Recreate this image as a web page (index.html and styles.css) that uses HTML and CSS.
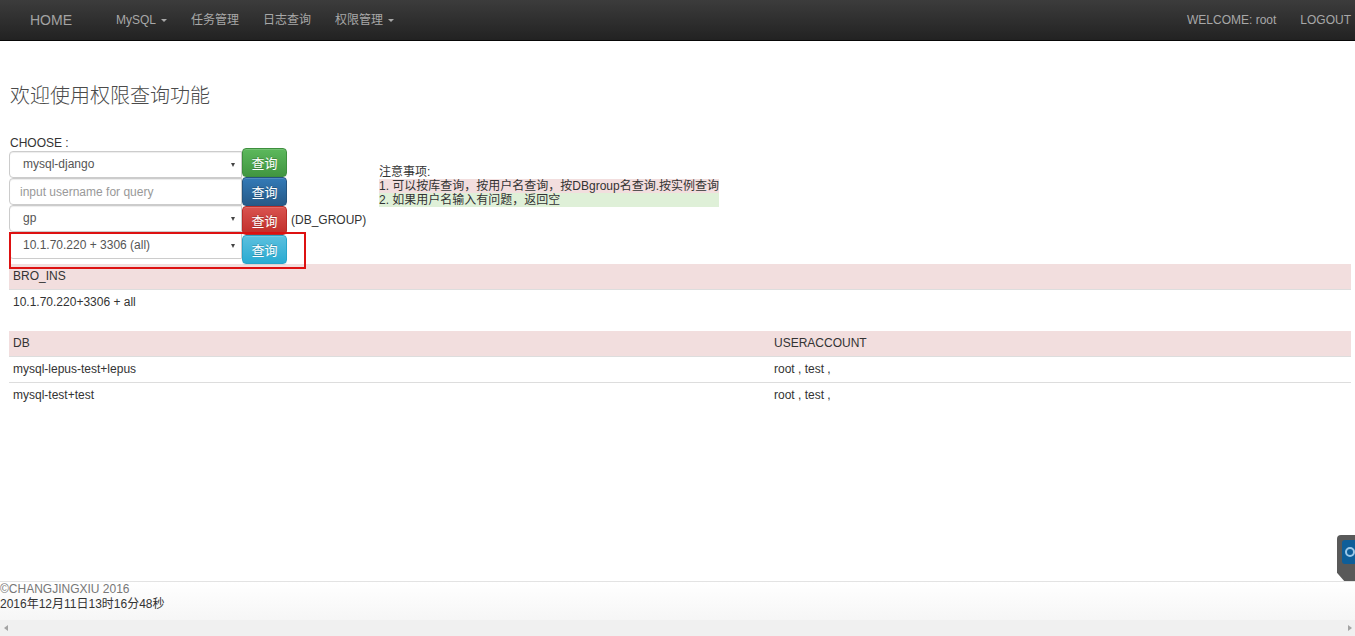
FILE: index.html
```html
<!DOCTYPE html>
<html lang="zh-CN">
<head>
<meta charset="utf-8">
<title>权限查询</title>
<link rel="stylesheet" href="styles.css">
</head>
<body>
<nav class="navbar">
  <a class="brand">HOME</a>
  <a class="nav-link">MySQL<span class="caret"></span></a>
  <a class="nav-link">任务管理</a>
  <a class="nav-link">日志查询</a>
  <a class="nav-link">权限管理<span class="caret"></span></a>
  <div class="nav-right">
    <a class="nav-link">WELCOME: root</a>
    <a class="nav-link last">LOGOUT</a>
  </div>
</nav>

<main class="main">
  <h3 class="title">欢迎使用权限查询功能</h3>
  <div class="query-area">
    <div class="form-col">
      <div class="choose-label">CHOOSE :</div>
      <div class="form-row row-1">
        <div class="select-box">mysql-django</div>
        <button class="btn btn-success">查询</button>
      </div>
      <div class="form-row row-2">
        <input class="text-input" type="text" placeholder="input username for query">
        <button class="btn btn-primary">查询</button>
      </div>
      <div class="form-row row-3">
        <div class="select-box">gp</div>
        <button class="btn btn-danger">查询</button>
        <span class="hint">(DB_GROUP)</span>
      </div>
      <div class="form-row row-4">
        <div class="select-box">10.1.70.220 + 3306 (all)</div>
        <button class="btn btn-info">查询</button>
        <div class="mark-box"></div>
      </div>
    </div>
    <div class="notes">
      <p>注意事项:</p>
      <p class="bg-danger">1. 可以按库查询，按用户名查询，按DBgroup名查询.按实例查询</p>
      <p class="bg-success">2. 如果用户名输入有问题，返回空</p>
    </div>
  </div>

  <table class="data-table first">
    <thead><tr><th>BRO_INS</th></tr></thead>
    <tbody><tr><td>10.1.70.220+3306 + all</td></tr></tbody>
  </table>

  <table class="data-table">
    <thead><tr><th class="col-db">DB</th><th>USERACCOUNT</th></tr></thead>
    <tbody>
      <tr><td>mysql-lepus-test+lepus</td><td>root , test ,</td></tr>
      <tr><td>mysql-test+test</td><td>root , test ,</td></tr>
    </tbody>
  </table>
</main>

<footer class="footer">
  <div class="copy">©CHANGJINGXIU 2016</div>
  <div class="time">2016年12月11日13时16分48秒</div>
</footer>
<div class="hscroll">
  <span class="arrow-left"></span>
  <span class="arrow-right"></span>
</div>

<div class="tv-widget"><span class="tv-icon"></span></div>
</body>
</html>
```

FILE: styles.css
```css
* { box-sizing: border-box; }
html, body { margin: 0; padding: 0; }
body {
  font-family: "Liberation Sans", Arial, "Noto Sans CJK SC", sans-serif;
  font-size: 12px;
  color: #333;
  background: #fff;
  display: flex;
  flex-direction: column;
  min-height: 100vh;
  overflow: hidden;
  position: relative;
}

/* navbar */
.navbar {
  height: 41px;
  display: flex;
  align-items: center;
  background: linear-gradient(to bottom, #3c3c3c 0%, #222 100%);
  border-bottom: 1px solid #080808;
  padding: 0 4px 0 0;
  flex: none;
}
.brand {
  font-size: 14px;
  color: #a3a3a3;
  padding: 0 32px 0 30px;
  line-height: 40px;
}
.nav-link {
  font-size: 12px;
  color: #a8a8a8;
  padding: 0 12px;
  line-height: 40px;
  display: flex;
  align-items: center;
}
.nav-link.last { padding-right: 0; }
.caret {
  display: inline-block;
  width: 0; height: 0;
  margin-left: 5px;
  border-top: 3px solid #a8a8a8;
  border-left: 3px solid transparent;
  border-right: 3px solid transparent;
}
.nav-right { margin-left: auto; display: flex; }

/* main */
.main {
  flex: 1;
  padding: 0 4px 0 9px;
}
.title {
  margin: 43px 0 31px 1px;
  font-size: 20px;
  line-height: 22px;
  font-weight: 300;
  color: #4a4a4a;
  font-family: "Noto Sans CJK SC", sans-serif;
}
.query-area { display: flex; }
.form-col { width: 370px; flex: none; }
.choose-label {
  height: 11px;
  line-height: 12px;
  font-size: 12px;
  color: #333;
  margin-left: 1px;
}
.form-row {
  height: 29px;
  display: flex;
  align-items: flex-start;
  position: relative;
}
.select-box, .text-input {
  width: 233px;
  height: 27px;
  border: 1px solid #ccc;
  border-radius: 4px 0 0 4px;
  box-shadow: inset 0 1px 1px rgba(0,0,0,.075);
  background: #fff;
  font-family: "Liberation Sans", Arial, "Noto Sans CJK SC", sans-serif;
  font-size: 12px;
  color: #555;
  line-height: 25px;
  padding: 0 0 0 13px;
  position: relative;
}
.row-1 .select-box { margin-top: 3px; }
.row-2 .text-input { margin-top: 1px; }
.row-3 .select-box { margin-top: -1px; }
.row-4 .select-box { margin-top: -3px; }
.select-box::after {
  content: "";
  position: absolute;
  right: 6px;
  top: 11px;
  border-top: 4px solid #444;
  border-left: 2.5px solid transparent;
  border-right: 2.5px solid transparent;
}
.text-input {
  padding-left: 10px;
  outline: none;
}
.text-input::placeholder { color: #999; }
.btn {
  width: 45px;
  height: 29px;
  border-radius: 4px;
  color: #fff;
  font-family: "Noto Sans CJK SC", sans-serif;
  font-size: 13px;
  line-height: 27px;
  padding: 0;
  text-align: center;
  text-shadow: 0 -1px 0 rgba(0,0,0,.2);
  box-shadow: inset 0 1px 0 rgba(255,255,255,.15), 0 1px 1px rgba(0,0,0,.075);
  flex: none;
}
.btn-success { background: linear-gradient(#5cb85c, #419641); border: 1px solid #3e8f3e; }
.btn-primary { background: linear-gradient(#337ab7, #265a88); border: 1px solid #245580; }
.btn-danger { background: linear-gradient(#d9534f, #c12e2a); border: 1px solid #b92c28; }
.btn-info { background: linear-gradient(#5bc0de, #2aabd2); border: 1px solid #28a4c9; }
.hint {
  margin-left: 4px;
  line-height: 29px;
  font-size: 12px;
}
.mark-box {
  position: absolute;
  left: 0;
  top: -3px;
  width: 297px;
  height: 37px;
  border: 2px solid #dd1111;
  pointer-events: none;
}

.notes {
  margin-top: 28px;
  align-self: flex-start;
}
.notes p {
  margin: 0;
  line-height: 14px;
  font-size: 12px;
  color: #333;
}
.bg-danger { background: #f2dede; }
.bg-success { background: #dff0d8; }

/* tables */
.data-table {
  width: 100%;
  border-collapse: collapse;
  margin-bottom: 16px;
}
.data-table th, .data-table td {
  text-align: left;
  font-weight: normal;
  padding: 4px 4px;
  line-height: 17px;
  font-size: 12px;
  color: #333;
}
.data-table th { background: #f2dede; }
.data-table td { border-top: 1px solid #ddd; }
.col-db { width: 761px; }

/* footer */
.footer {
  flex: none;
  height: 39px;
  border-top: 1px solid #e3e3e3;
  background: linear-gradient(#fff, #f6f6f6);
  padding-left: 0;
}
.footer div {
  line-height: 14px;
  font-size: 12px;
}
.copy { color: #777; }
.time { color: #333; margin-top: 1px; }

.hscroll {
  flex: none;
  height: 16px;
  background: #f0f0f0;
  display: flex;
  align-items: center;
  justify-content: space-between;
  padding: 0 3px 0 4px;
}
.arrow-left {
  width: 0; height: 0;
  border-right: 4px solid #a3a3a3;
  border-top: 3.5px solid transparent;
  border-bottom: 3.5px solid transparent;
}
.arrow-right {
  width: 0; height: 0;
  border-left: 4px solid #a3a3a3;
  border-top: 3.5px solid transparent;
  border-bottom: 3.5px solid transparent;
}

/* teamviewer widget */
.tv-widget {
  position: absolute;
  right: 0;
  top: 535px;
  width: 18px;
  height: 46px;
  background: #595959;
  border-radius: 4px 0 0 0;
  clip-path: polygon(0 0, 100% 0, 100% 100%, 40% 100%, 0 82%);
}
.tv-icon {
  position: absolute;
  left: 5px;
  top: 5px;
  width: 14px;
  height: 24px;
  background: #0e5e99;
  border-radius: 3px 0 0 3px;
}
.tv-icon::after {
  content: "";
  position: absolute;
  left: 3px;
  top: 7px;
  width: 10px;
  height: 10px;
  border: 2px solid #9cc8e8;
  border-radius: 50%;
  box-sizing: border-box;
}
```
